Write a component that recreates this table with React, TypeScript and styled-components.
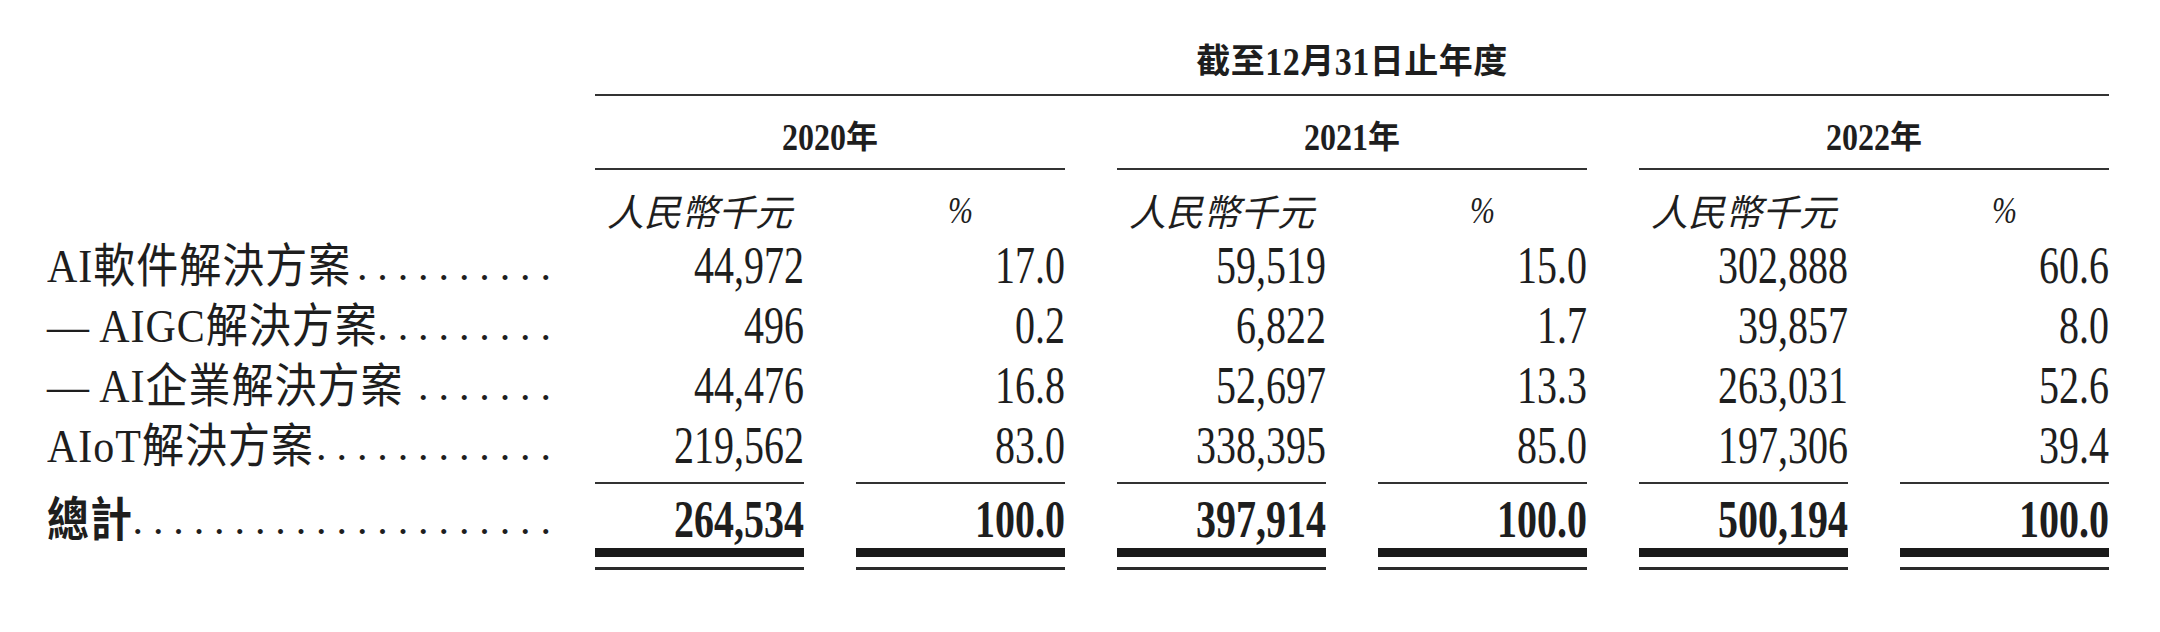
import React from "react";
import styled, { createGlobalStyle } from "styled-components";

const GlobalStyle = createGlobalStyle`
  html, body { margin: 0; padding: 0; background: #ffffff; }
  body {
    width: 2160px;
    height: 632px;
    overflow: hidden;
    font-family: "Liberation Serif", "Noto Sans CJK TC", serif;
    color: #1e1e1e;
  }
`;

const Page = styled.div`
  padding-left: 47px;
`;

const Grid = styled.div`
  display: grid;
  grid-template-columns: 496px repeat(6, 209px);
  column-gap: 52px;
  align-items: start;
`;

const Tall = styled.span<{ $s?: number }>`
  display: inline-block;
  transform: scaleY(${(p) => p.$s ?? 1.3});
  transform-origin: 50% 50%;
`;

const Blank = styled.div``;

const PeriodHeader = styled.div`
  grid-column: 2 / 8;
  box-sizing: border-box;
  height: 96px;
  padding-bottom: 12px;
  border-bottom: 2px solid #333;
  display: flex;
  align-items: flex-end;
  justify-content: center;
  font-size: 34px;
  line-height: 40px;
  font-weight: 700;
  letter-spacing: 0.5px;
  white-space: nowrap;
`;

const YearCell = styled.div<{ $col: number }>`
  grid-column: ${(p) => p.$col} / span 2;
  box-sizing: border-box;
  height: 74px;
  padding-top: 21px;
  border-bottom: 2px solid #333;
  text-align: center;
  font-size: 32px;
  line-height: 40px;
  font-weight: 700;
  white-space: nowrap;
`;

const SubHead = styled.div<{ $latin?: boolean }>`
  box-sizing: border-box;
  height: 66px;
  padding-top: 20px;
  text-align: center;
  font-style: italic;
  font-size: ${(p) => (p.$latin ? "30px" : "37px")};
  font-family: ${(p) =>
    p.$latin ? `"Liberation Serif", serif` : `"Noto Sans CJK TC", sans-serif`};
  line-height: 40px;
  font-weight: 400;
  white-space: nowrap;
`;

const LabelCell = styled.div`
  box-sizing: border-box;
  height: 60px;
  margin-right: -8px;
  display: flex;
  align-items: center;
  font-size: 42px;
  line-height: 40px;
  white-space: nowrap;
`;

const TotalLabelCell = styled(LabelCell)`
  height: auto;
  margin-top: 6px;
  padding-top: 18px;
`;

const LabelText = styled.span<{ $bold?: boolean }>`
  display: inline-block;
  flex-shrink: 0;
  letter-spacing: 1px;
  transform: scaleY(1.12);
  font-weight: ${(p) => (p.$bold ? 700 : 400)};
`;

const Leader = styled.span`
  flex: 1;
  min-width: 0;
  display: flex;
  justify-content: flex-end;
`;

const Dots = styled.span`
  flex-shrink: 0;
  letter-spacing: 9.9px;
  margin-right: -9.9px;
`;

const NumCell = styled.div`
  box-sizing: border-box;
  height: 60px;
  display: flex;
  align-items: center;
  justify-content: flex-end;
  font-size: 40px;
  line-height: 40px;
  white-space: nowrap;
`;

const TotalCell = styled.div`
  margin-top: 6px;
  border-top: 2px solid #333;
  border-bottom: 3px solid #2a2a2a;
  padding-bottom: 10px;
`;

const TotalValue = styled.div`
  padding-top: 16px;
  padding-bottom: 8px;
  border-bottom: 9px solid #1a1a1a;
  text-align: right;
  font-size: 40px;
  line-height: 40px;
  font-weight: 700;
  white-space: nowrap;
`;

const rows = [
  { label: "AI軟件解決方案", dots: 10, values: ["44,972", "17.0", "59,519", "15.0", "302,888", "60.6"] },
  { label: "— AIGC解決方案", dots: 9, values: ["496", "0.2", "6,822", "1.7", "39,857", "8.0"] },
  { label: "— AI企業解決方案", dots: 7, values: ["44,476", "16.8", "52,697", "13.3", "263,031", "52.6"] },
  { label: "AIoT解決方案", dots: 12, values: ["219,562", "83.0", "338,395", "85.0", "197,306", "39.4"] },
];

const totals = ["264,534", "100.0", "397,914", "100.0", "500,194", "100.0"];
const years = ["2020", "2021", "2022"];

export default function App() {
  return (
    <>
      <GlobalStyle />
      <Page>
        <Grid>
          <Blank />
          <PeriodHeader>
            截至<Tall $s={1.15}>12</Tall>月<Tall $s={1.15}>31</Tall>日止年度
          </PeriodHeader>

          <Blank />
          {years.map((y, i) => (
            <YearCell key={y} $col={2 + i * 2}>
              <Tall $s={1.2}>{y}</Tall>年
            </YearCell>
          ))}

          <Blank />
          {years.map((y) => (
            <React.Fragment key={y}>
              <SubHead>人民幣千元</SubHead>
              <SubHead $latin>
                <Tall $s={1.25}>%</Tall>
              </SubHead>
            </React.Fragment>
          ))}

          {rows.map((r) => (
            <React.Fragment key={r.label}>
              <LabelCell>
                <LabelText>{r.label}</LabelText>
                <Leader>
                  <Dots>{".".repeat(r.dots)}</Dots>
                </Leader>
              </LabelCell>
              {r.values.map((v, i) => (
                <NumCell key={i}>
                  <Tall>{v}</Tall>
                </NumCell>
              ))}
            </React.Fragment>
          ))}

          <TotalLabelCell>
            <LabelText $bold>總計</LabelText>
            <Leader>
              <Dots>{".".repeat(21)}</Dots>
            </Leader>
          </TotalLabelCell>
          {totals.map((v, i) => (
            <TotalCell key={i}>
              <TotalValue>
                <Tall>{v}</Tall>
              </TotalValue>
            </TotalCell>
          ))}
        </Grid>
      </Page>
    </>
  );
}
